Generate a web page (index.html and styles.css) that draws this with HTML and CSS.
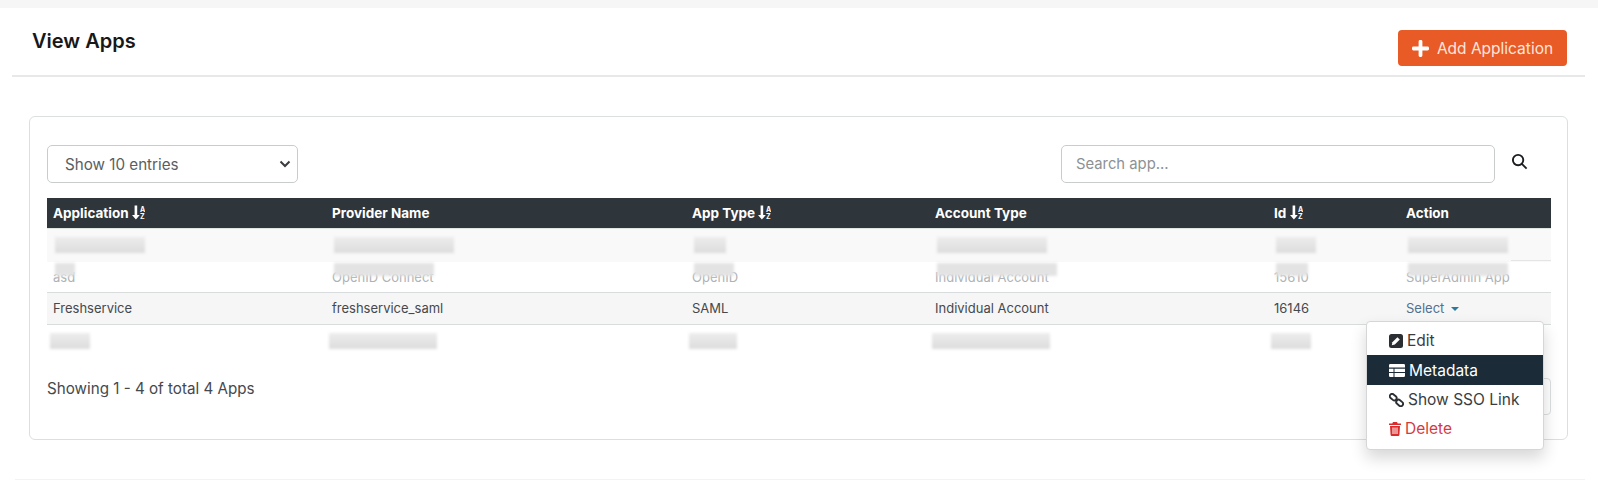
FILE: index.html
```html
<!DOCTYPE html>
<html lang="en">
<head>
<meta charset="utf-8">
<title>View Apps</title>
<link rel="stylesheet" href="styles.css">
</head>
<body>
<div class="topband"></div>
<main class="page">
  <header class="head">
    <h1 class="title">View Apps</h1>
    <button class="add-btn" type="button">
      <svg class="plus" viewBox="0 0 18 18"><path d="M7 1.500a1.500 1.500 0 0 1 1.500-1.500h1A1.500 1.500 0 0 1 11 1.500V7h5.500A1.500 1.500 0 0 1 18 8.500v1a1.500 1.500 0 0 1-1.500 1.500H11v5.500a1.500 1.500 0 0 1-1.500 1.500h-1A1.500 1.500 0 0 1 7 16.500V11H1.500A1.500 1.500 0 0 1 0 9.500v-1A1.500 1.500 0 0 1 1.500 7H7z"/></svg>
      <span>Add Application</span>
    </button>
  </header>

  <section class="card">
    <div class="toolbar">
      <div class="select-box">
        <span>Show 10 entries</span>
        <svg class="chev" viewBox="0 0 12 8"><path d="M1.500 1.500 6 6l4.500-4.500"/></svg>
      </div>
      <div class="search-wrap">
        <div class="search-box">Search app...</div>
        <svg class="search-icon" viewBox="0 0 18 18"><circle cx="7.500" cy="7.500" r="5.500"/><path d="m11.500 11.500 5 5"/></svg>
      </div>
    </div>

    <table class="apps">
      <thead>
        <tr>
          <th class="c1">Application <svg class="sort" viewBox="0 0 13 15"><path class="arrow" d="M2.600 0.500h2.600v9.500H7.800L3.900 14.500 0 10H2.600z"/><text x="8" y="6.500">A</text><text x="8" y="14">Z</text></svg></th>
          <th class="c2">Provider Name</th>
          <th class="c3">App Type <svg class="sort" viewBox="0 0 13 15"><path class="arrow" d="M2.600 0.500h2.600v9.500H7.800L3.900 14.500 0 10H2.600z"/><text x="8" y="6.500">A</text><text x="8" y="14">Z</text></svg></th>
          <th class="c4">Account Type</th>
          <th class="c5">Id <svg class="sort" viewBox="0 0 13 15"><path class="arrow" d="M2.600 0.500h2.600v9.500H7.800L3.900 14.500 0 10H2.600z"/><text x="8" y="6.500">A</text><text x="8" y="14">Z</text></svg></th>
          <th class="c6">Action</th>
        </tr>
      </thead>
      <tbody>
        <tr class="row-a">
          <td><span class="redact r90"></span></td>
          <td><span class="redact r120"></span></td>
          <td><span class="redact r30"></span></td>
          <td><span class="redact r110"></span></td>
          <td><span class="redact r40"></span></td>
          <td><span class="redact r100"></span></td>
        </tr>
        <tr class="row-b">
          <td><span class="part">asd<span class="cover r20"></span></span></td>
          <td><span class="part">OpenID Connect<span class="cover r100"></span></span></td>
          <td><span class="part">OpenID<span class="cover r40"></span></span></td>
          <td><span class="part">Individual Account<span class="cover r120"></span></span></td>
          <td><span class="part">15610<span class="cover r30"></span></span></td>
          <td><span class="part">SuperAdmin App<span class="cover r100"></span></span></td>
        </tr>
        <tr class="row-c">
          <td>Freshservice</td>
          <td>freshservice_saml</td>
          <td>SAML</td>
          <td>Individual Account</td>
          <td>16146</td>
          <td><a class="select-link">Select <i class="caret"></i></a></td>
        </tr>
        <tr class="row-d">
          <td><span class="redact r40 shift"></span></td>
          <td><span class="redact r108 shift"></span></td>
          <td><span class="redact r48 shift"></span></td>
          <td><span class="redact r118 shift"></span></td>
          <td><span class="redact r40 shift"></span></td>
          <td></td>
        </tr>
      </tbody>
    </table>

    <div class="foot">
      <span class="count">Showing 1 - 4 of total 4 Apps</span>
      <div class="pager"></div>
    </div>
  </section>

  <div class="page-end"></div>

  <ul class="menu">
    <li class="item">
      <svg class="mi" viewBox="0 0 14 14"><rect width="14" height="14" rx="2.500" fill="#2b2f33"/><path d="M2.800 11.200l.6-3 5-5 2.400 2.400-5 5z" fill="#fff"/></svg>
      <span>Edit</span>
    </li>
    <li class="item active">
      <svg class="mi wide" viewBox="0 0 16 13"><path d="M0 1.200A1.200 1.200 0 0 1 1.200 0h13.600A1.200 1.200 0 0 1 16 1.200V3.500H0zM0 4.700h4.500v3.200H0zM5.500 4.700H16v3.200H5.500zM0 9.100h4.500V13H1.200A1.200 1.200 0 0 1 0 11.800zM5.500 9.100H16v2.700a1.200 1.200 0 0 1-1.200 1.200H5.500z" fill="#fff"/></svg>
      <span>Metadata</span>
    </li>
    <li class="item">
      <svg class="mi link" viewBox="0 0 15 14"><g fill="none" stroke="#2b2f33" stroke-width="1.900"><rect x="-3.500" y="-2.300" width="7.500" height="4.600" rx="2.300" transform="translate(4 4) rotate(40)"/><rect x="-3.800" y="-2.300" width="7.500" height="4.600" rx="2.300" transform="translate(10.700 10) rotate(40)"/></g></svg>
      <span>Show SSO Link</span>
    </li>
    <li class="item danger">
      <svg class="mi trash" viewBox="0 0 12 14"><path d="M4 0h4l.7 1.400H12v1.500H0V1.400h3.300zM1 3.900h10l-.6 9a1.200 1.200 0 0 1-1.200 1.100H2.800a1.200 1.200 0 0 1-1.200-1.100z" fill="#d92c2c"/><path d="M4 5.500v6.500M6 5.500v6.500M8 5.500v6.500" stroke="#fff" stroke-width="1"/></svg>
      <span>Delete</span>
    </li>
  </ul>
</main>
</body>
</html>
```
FILE: styles.css
```css
* { box-sizing: border-box; }
html, body { margin: 0; padding: 0; }
body {
  background: #fff;
  color: #3f4347;
  font-family: "Inter", "Liberation Sans", sans-serif;
  width: 1598px;
  height: 503px;
  overflow: hidden;
}
.topband { height: 8px; background: #f6f6f6; }

.page { position: relative; padding: 0 13px 0 12px; }

.head {
  height: 69px;
  border-bottom: 2px solid #e7e9e9;
  display: flex;
  justify-content: space-between;
  align-items: flex-start;
  padding: 0 0 0 20px;
}
.title {
  margin: 21px 0 0;
  font-size: 20px;
  line-height: 24px;
  font-weight: 600;
  color: #16181a;
}
.add-btn {
  margin: 22px 18px 0 0;
  width: 169px;
  height: 36px;
  border: 0;
  border-radius: 4px;
  background: #e85a26;
  color: #fde6dc;
  font: 400 15.500px "Inter", sans-serif;
  display: flex;
  align-items: center;
  justify-content: center;
  gap: 8px;
  padding: 0;
}
.plus { width: 17px; height: 17px; fill: #fff; }

.card {
  margin: 39px 17px 0 17px;
  height: 324px;
  border: 1px solid #dcdfe0;
  border-radius: 6px;
  padding: 28px 16px 0 17px;
  background: #fff;
}
.toolbar {
  display: flex;
  justify-content: space-between;
  height: 53px;
}
.select-box {
  width: 251px;
  height: 38px;
  border: 1px solid #c9cccd;
  border-radius: 5px;
  display: flex;
  align-items: center;
  justify-content: space-between;
  padding: 0 6px 0 17px;
  font-size: 15.200px;
  color: #5a5e62;
}
.chev { width: 12px; height: 8px; fill: none; stroke: #3a3d40; stroke-width: 2; }
.search-wrap { display: flex; align-items: flex-start; gap: 16px; }
.search-box {
  width: 434px;
  height: 38px;
  border: 1px solid #c9cccd;
  border-radius: 5px;
  padding: 0 14px;
  line-height: 36px;
  font-size: 14.800px;
  color: #8d9194;
}
.search-icon {
  width: 17px;
  height: 17px;
  margin: 8px 23px 0 0;
  fill: none;
  stroke: #1b1e20;
  stroke-width: 2;
}

.apps {
  width: 1504px;
  border-collapse: collapse;
  table-layout: fixed;
  font-size: 13px;
}
.apps th {
  background: #2e353b;
  color: #fff;
  height: 30px;
  padding: 0 6px;
  text-align: left;
  font-weight: 700;
  font-size: 13.500px;
  border-bottom: 1px solid #dfe6e2;
  white-space: nowrap;
}
.c1 { width: 279px; }
.c2 { width: 360px; }
.c3 { width: 243px; }
.c4 { width: 339px; }
.c5 { width: 132px; }
.c6 { width: 151px; }
.sort { width: 13px; height: 15px; vertical-align: -2px; }
.arrow { fill: #fff; }
.sort text { font: 700 7px "Inter", sans-serif; fill: #fff; }

.apps td {
  padding: 0 6px;
  white-space: nowrap;
  color: #45494d;
}
.row-a td { height: 33px; background: #f9f9f9; border-bottom: 1px solid #f9f9f9; }
.row-a td:last-child {
  background: linear-gradient(#e4e6e6, #e4e6e6) right bottom / 40px 1px no-repeat, #f9f9f9;
}
.row-a .redact { margin-left: 2px; }
.row-b td { height: 31px; background: #fff; border-bottom: 1px solid #d9dcdc; color: #aeb2b4; }
.row-c td { height: 32px; background: #f6f6f6; border-bottom: 1px solid #d9dcdc; }
.row-d td { height: 32px; background: #fff; vertical-align: middle; }

.redact {
  display: inline-block;
  height: 16px;
  vertical-align: middle;
  background: linear-gradient(#ececec, #dcdcdc);
  filter: blur(1.500px);
}
.part { position: relative; display: inline-block; }
.cover {
  position: absolute;
  left: 2px;
  top: -6px;
  height: 13px;
  background: #e3e3e3;
  filter: blur(1.500px);
}
.r20 { width: 20px; }
.r30 { width: 32px; }
.r40 { width: 40px; }
.r48 { width: 48px; }
.r90 { width: 90px; }
.r100 { width: 100px; }
.r108 { width: 108px; }
.r110 { width: 110px; }
.r118 { width: 118px; }
.r120 { width: 120px; }
.row-d .shift { margin-left: -3px; }

.select-link { color: #52708f; }
.caret {
  display: inline-block;
  border-left: 4px solid transparent;
  border-right: 4px solid transparent;
  border-top: 4px solid #2a7a9e;
  margin-left: 3px;
  vertical-align: 2px;
}

.foot {
  display: flex;
  justify-content: space-between;
  align-items: flex-start;
  margin-top: 23px;
}
.count { font-size: 15.200px; line-height: 20px; color: #45494d; }
.pager {
  width: 80px;
  height: 37px;
  border: 1px solid #dcdfe0;
  border-radius: 4px;
  margin-top: -1px;
}
.page-end {
  margin: 39px 0 0 3px;
  height: 1px;
  background: #f2f3f3;
}

.menu {
  position: absolute;
  left: 1366px;
  top: 313px;
  width: 178px;
  height: 129px;
  margin: 0;
  padding: 4px 0;
  list-style: none;
  background: #fff;
  border: 1px solid #d4d6d7;
  border-radius: 4px;
  box-shadow: 0 8px 16px rgba(0, 0, 0, .16);
  font-size: 15.500px;
  color: #3a3d40;
}
.item {
  height: 29px;
  display: flex;
  align-items: center;
  gap: 4px;
  padding-left: 22px;
}
.item.active { background: #1b2b38; color: #fff; height: 30px; }
.item.danger { color: #d33a3f; }
.mi { width: 14px; height: 14px; flex: none; }
.mi.wide { width: 16px; height: 13px; }
.mi.link { width: 15px; height: 14px; }
.mi.trash { width: 12px; height: 14px; }
```
